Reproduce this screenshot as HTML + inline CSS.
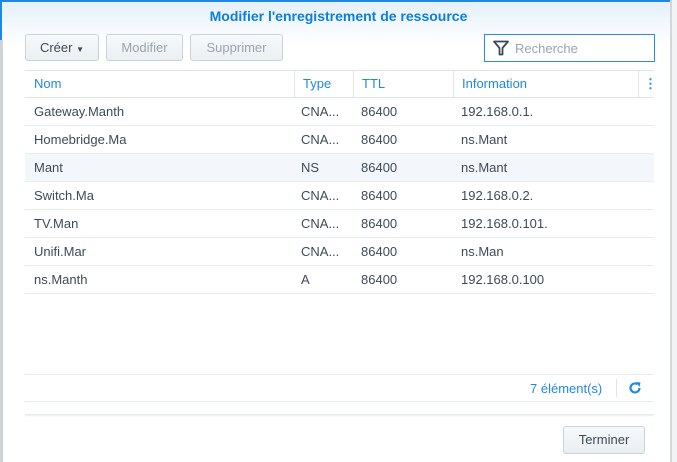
<!DOCTYPE html>
<html><head><meta charset="utf-8"><style>
*{margin:0;padding:0;box-sizing:border-box}
body{width:677px;height:462px;overflow:hidden;background:#fff;font-family:"Liberation Sans",sans-serif;font-size:13px;color:#3d4a57;position:relative}
.abs{position:absolute}
.btn{position:absolute;top:34px;height:27px;border:1px solid #c9d3dc;border-radius:3px;background:linear-gradient(#f7f9fb,#eaeff3);text-align:center;line-height:25px;font-size:13px}
.row{position:absolute;left:25px;width:629px;height:28px;border-bottom:1px solid #e6ebf0;line-height:27px}
.row span{position:absolute}
</style></head><body>
<div class="abs" style="left:0;top:0;width:677px;height:45px;background:linear-gradient(#e3effa,#fff)"></div>
<div class="abs" style="left:0;top:0;width:672px;height:2px;background:#1e88e5"></div>
<div class="abs" style="left:0;top:0;width:2px;height:40px;background:#1e88e5"></div>
<div class="abs" style="left:0;top:40px;width:3px;height:422px;background:#cfd3d7"></div>
<div class="abs" style="left:670px;top:0;width:2px;height:462px;background:#d3d7db"></div>
<div class="abs" style="left:672px;top:0;width:5px;height:462px;background:#f2f3f4"></div>
<div class="abs" style="left:0;top:8px;width:677px;text-align:center;font-weight:bold;font-size:14px;color:#0b7fd9">Modifier l'enregistrement de ressource</div>
<div class="btn" style="left:25px;width:74px;color:#3d4a57">Créer <span style="font-size:8px">▼</span></div>
<div class="btn" style="left:106px;width:77px;color:#9aa5b0">Modifier</div>
<div class="btn" style="left:190px;width:93px;color:#9aa5b0">Supprimer</div>
<div class="abs" style="left:484px;top:34px;width:171px;height:28px;border:1px solid #2a8ae0;background:#fff"></div>
<svg class="abs" style="left:493px;top:40px" width="16" height="16" viewBox="0 0 16 16"><path d="M1 1.5H15L9.5 8V14.5H6.5V8Z" fill="none" stroke="#3d4a57" stroke-width="1.8" stroke-linejoin="round"/></svg>
<div class="abs" style="left:515px;top:41px;color:#9aa5b0">Recherche</div>
<div class="abs" style="left:25px;top:70px;width:629px;height:28px;border-top:1px solid #dde3e9;border-bottom:1px solid #dde3e9;color:#1e88e5;line-height:26px">
<span class="abs" style="left:9px">Nom</span><span class="abs" style="left:269px;top:0;height:26px;border-left:1px solid #e1e6eb;padding-left:8px">Type</span><span class="abs" style="left:328px;height:26px;border-left:1px solid #e1e6eb;padding-left:8px">TTL</span><span class="abs" style="left:428px;height:26px;border-left:1px solid #e1e6eb;padding-left:8px">Information</span><span class="abs" style="left:613px;height:26px;border-left:1px solid #e1e6eb;padding-left:5px;font-weight:bold">⋮</span></div>
<div class="row" style="top:98px"><span style="left:9px">Gateway.Manth</span><span style="left:276px">CNA...</span><span style="left:336px">86400</span><span style="left:436px">192.168.0.1.</span></div>
<div class="row" style="top:126px"><span style="left:9px">Homebridge.Ma</span><span style="left:276px">CNA...</span><span style="left:336px">86400</span><span style="left:436px">ns.Mant</span></div>
<div class="row" style="top:154px;background:#f3f7fb"><span style="left:9px">Mant</span><span style="left:276px">NS</span><span style="left:336px">86400</span><span style="left:436px">ns.Mant</span></div>
<div class="row" style="top:182px"><span style="left:9px">Switch.Ma</span><span style="left:276px">CNA...</span><span style="left:336px">86400</span><span style="left:436px">192.168.0.2.</span></div>
<div class="row" style="top:210px"><span style="left:9px">TV.Man</span><span style="left:276px">CNA...</span><span style="left:336px">86400</span><span style="left:436px">192.168.0.101.</span></div>
<div class="row" style="top:238px"><span style="left:9px">Unifi.Mar</span><span style="left:276px">CNA...</span><span style="left:336px">86400</span><span style="left:436px">ns.Man</span></div>
<div class="row" style="top:266px"><span style="left:9px">ns.Manth</span><span style="left:276px">A</span><span style="left:336px">86400</span><span style="left:436px">192.168.0.100</span></div>
<div class="abs" style="left:25px;top:374px;width:629px;height:28px;border-top:1px solid #e6ebf0;border-bottom:1px solid #e6ebf0"></div>
<div class="abs" style="left:530px;top:381px;color:#1e88e5">7 élément(s)</div>
<div class="abs" style="left:616px;top:379px;width:1px;height:18px;background:#dde3e9"></div>
<svg class="abs" style="left:628px;top:381px" width="14" height="14" viewBox="0 0 14 14"><path d="M11.5 7A4.5 4.5 0 1 1 9.5 3.2" fill="none" stroke="#1e88e5" stroke-width="2.2"/><path d="M8 1L12.5 1.5L11.5 6Z" fill="#1e88e5"/></svg>
<div class="abs" style="left:25px;top:414px;width:629px;height:3px;background:linear-gradient(#e2e5e8,#fff)"></div>
<div class="abs" style="left:563px;top:426px;width:82px;height:28px;border:1px solid #c9d3dc;border-radius:3px;background:linear-gradient(#f7f9fb,#e9eef2);text-align:center;line-height:26px">Terminer</div>
</body></html>
